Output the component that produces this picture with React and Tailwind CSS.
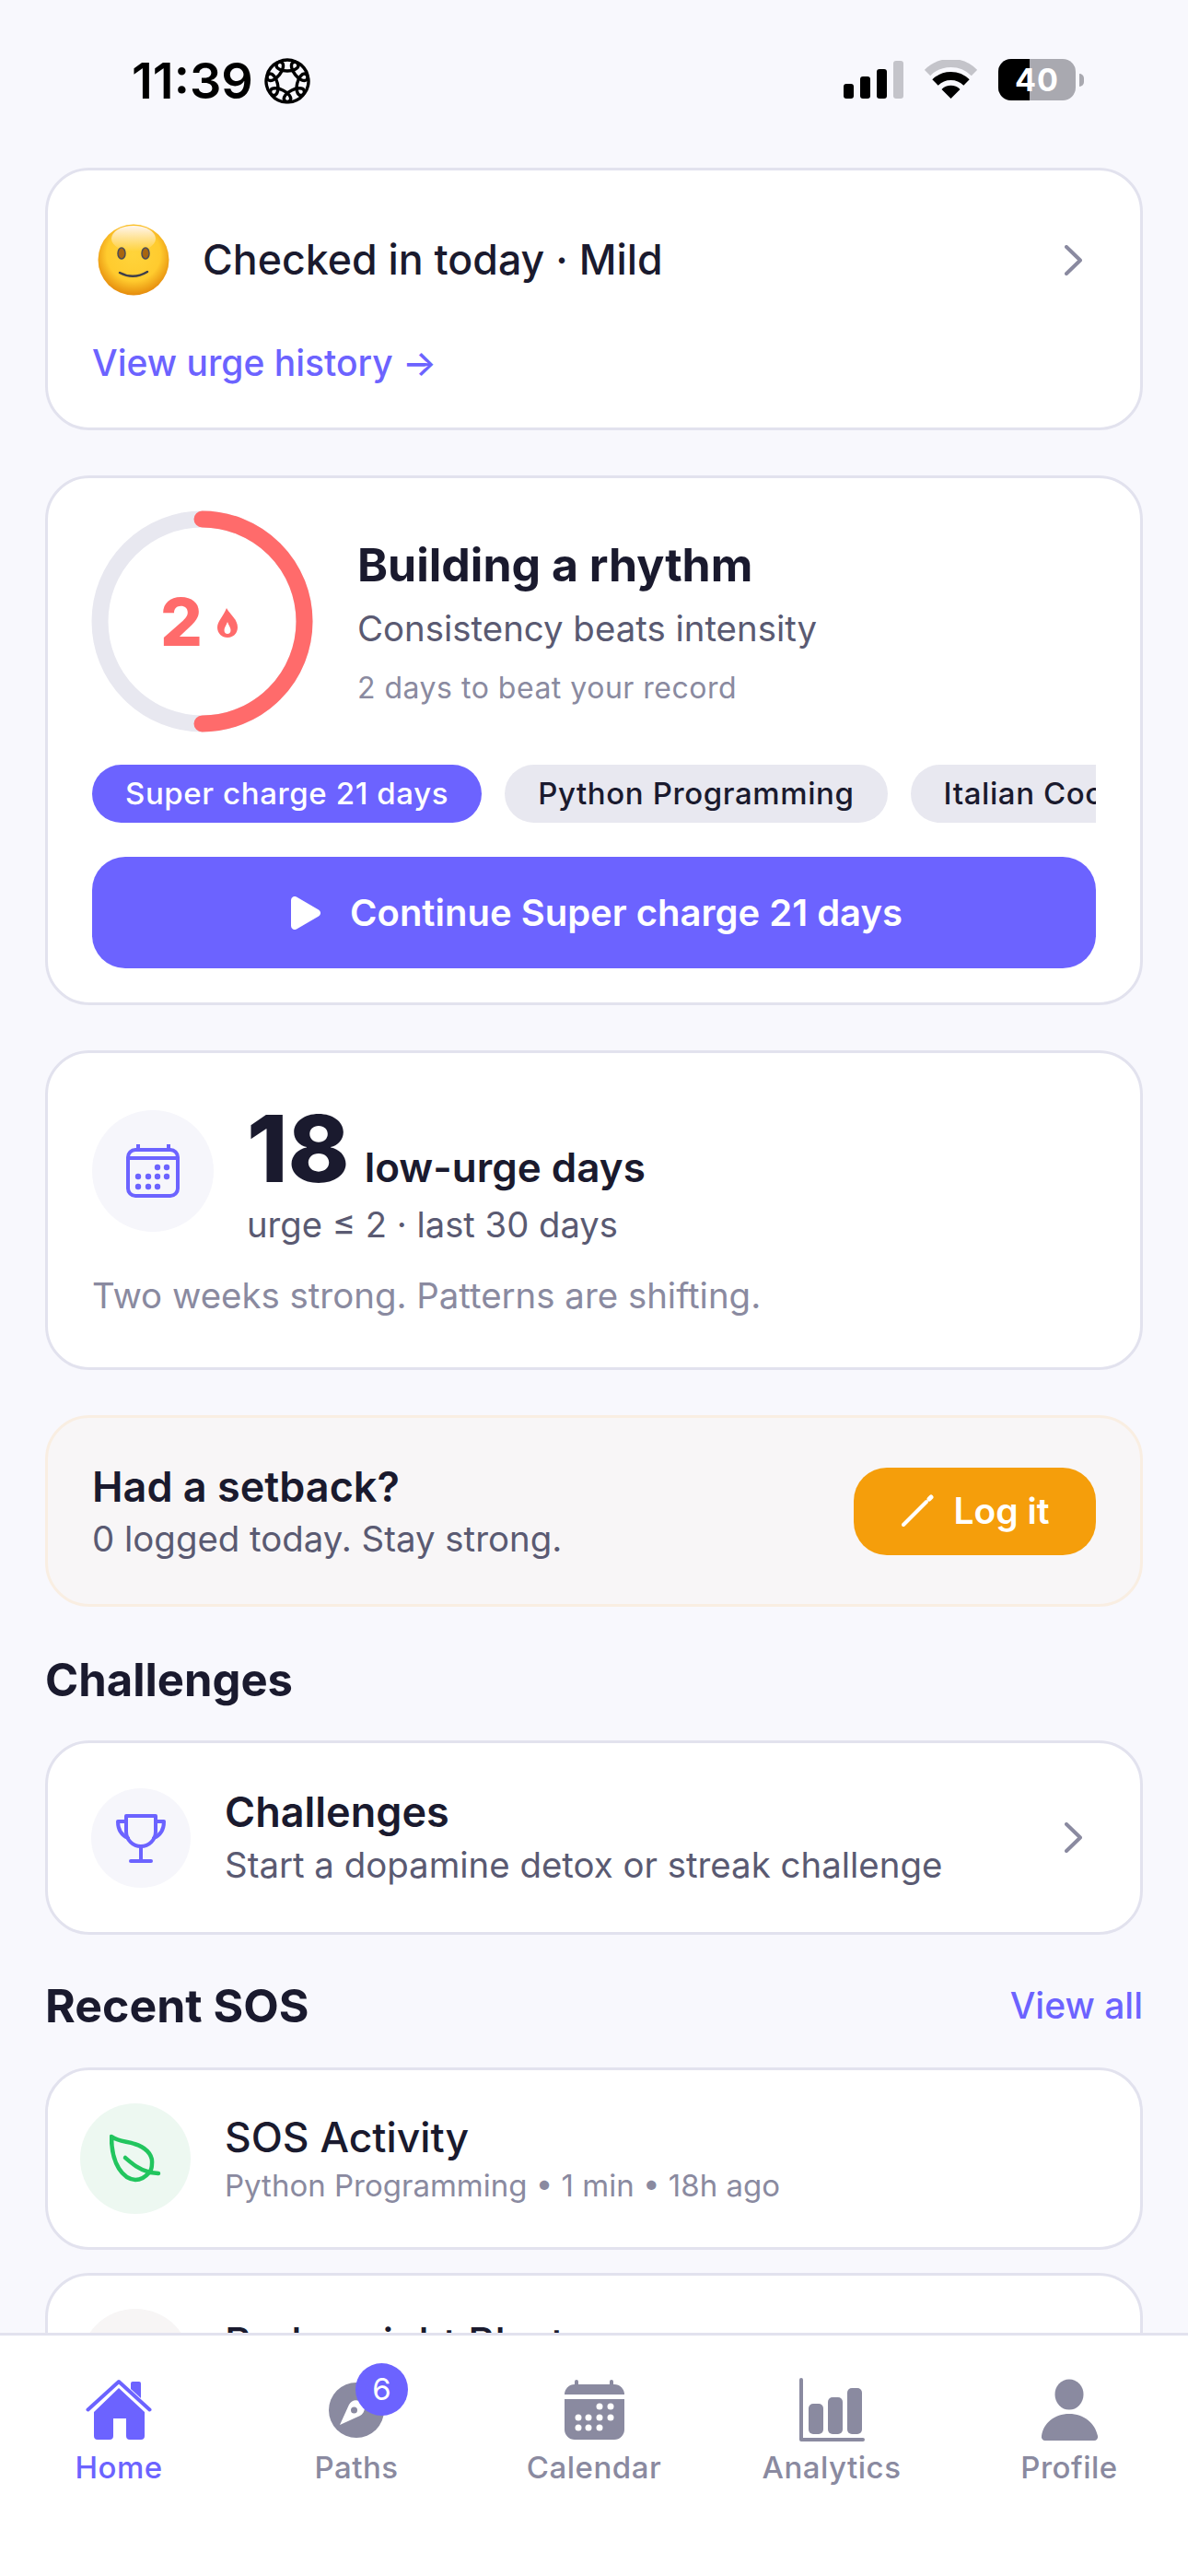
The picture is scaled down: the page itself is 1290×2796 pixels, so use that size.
import React from 'react';

const StatusBar = () => (
  <div className="flex h-[182px] shrink-0 items-start justify-between pl-[143px] pr-[113px] pt-[60px]">
    <div className="flex items-center gap-[12px]">
      <span className="text-[54px] leading-[56px] font-semibold text-black">11:39</span>
      <svg width="50" height="50" viewBox="-25 -25 50 50" fill="none" stroke="black" strokeWidth="3.400">
        {[0, 1, 2, 3, 4, 5, 6].map((i) => (
          <ellipse key={i} cx="0" cy="-17" rx="12" ry="6" transform={`rotate(${(i * 360) / 7})`} />
        ))}
      </svg>
    </div>
    <div className="flex items-center gap-[23px] pt-[4px]">
      <div className="flex h-[41px] items-end gap-[7px]">
        <div className="h-[16px] w-[11px] rounded-[3px] bg-black" />
        <div className="h-[24px] w-[11px] rounded-[3px] bg-black" />
        <div className="h-[32px] w-[11px] rounded-[3px] bg-black" />
        <div className="h-[41px] w-[11px] rounded-[3px] bg-[#C4C4CA]" />
      </div>
      <svg width="57" height="43" viewBox="0 0 57 43" fill="none">
        <path d="M3 14 A36 36 0 0 1 54 14" stroke="#C4C4CA" strokeWidth="9" />
        <path d="M11.5 24.5 A24 24 0 0 1 45.5 24.5" stroke="black" strokeWidth="9" />
        <path d="M28.5 42 L18.5 32 A14 14 0 0 1 38.5 32 Z" fill="black" />
      </svg>
      <div className="flex items-center gap-[4px]">
        <div className="relative flex h-[45px] w-[84px] items-center justify-center overflow-hidden rounded-[14px] bg-[#A9A9B0]">
          <div className="absolute inset-y-0 left-0 w-[34px] bg-black" />
          <span className="relative text-[34px] leading-none font-bold tracking-[1px] text-white">40</span>
        </div>
        <div className="h-[14px] w-[5px] rounded-r-full bg-[#A9A9B0]" />
      </div>
    </div>
  </div>
);

const Chevron = () => (
  <svg width="19" height="33" viewBox="0 0 19 33" fill="none" stroke="#8A8AA0" strokeWidth="4" strokeLinecap="round" strokeLinejoin="round">
    <path d="M2 2 L17 16.5 L2 31" />
  </svg>
);

const Smiley = () => (
  <svg width="80" height="80" viewBox="0 0 80 80" className="shrink-0">
    <defs>
      <radialGradient id="face" cx="50%" cy="42%" r="58%">
        <stop offset="0%" stopColor="#FFD43B" />
        <stop offset="65%" stopColor="#FFCB2E" />
        <stop offset="100%" stopColor="#E58B0C" />
      </radialGradient>
      <linearGradient id="shine" x1="0" y1="0" x2="0" y2="1">
        <stop offset="0%" stopColor="#FFF6EE" />
        <stop offset="100%" stopColor="#FFF6EE" stopOpacity="0" />
      </linearGradient>
    </defs>
    <circle cx="40" cy="40" r="38.5" fill="url(#face)" />
    <ellipse cx="40" cy="17" rx="24" ry="14" fill="url(#shine)" />
    <ellipse cx="27" cy="33" rx="4" ry="6" fill="#A86510" stroke="#4B4B55" strokeWidth="1.5" />
    <ellipse cx="53" cy="33" rx="4" ry="6" fill="#A86510" stroke="#4B4B55" strokeWidth="1.5" />
    <path d="M25 54 Q40 62 55 53" fill="none" stroke="#3F3F4A" strokeWidth="2.5" strokeLinecap="round" />
  </svg>
);

const Ring = () => (
  <div className="relative h-[243px] w-[243px] shrink-0">
    <svg width="243" height="243" viewBox="0 0 243 243" fill="none">
      <circle cx="121.5" cy="121.5" r="111" stroke="#E8E8F0" strokeWidth="18" />
      <path d="M121.5 10.5 A111 111 0 0 1 121.5 232.5" stroke="#FF6B6B" strokeWidth="18" strokeLinecap="round" />
    </svg>
    <div className="absolute inset-0 flex items-center justify-center gap-[15px] pr-[6px]">
      <span className="text-[72px] leading-none font-extrabold text-[#FF6B6B]">2</span>
      <svg width="24" height="32" viewBox="0 0 24 32" className="mt-[2px]">
        <path fillRule="evenodd" d="M11 0 C14 6 23 12 23 21 C23 27.500 18 32 12 32 C6 32 1 27.500 1 21 C1 14 7 10 11 0 Z M12 15 C10.500 19 8.500 21 8.500 24 C8.500 26.500 10 28 12 28 C14 28 15.500 26.500 15.500 24 C15.500 21 13.500 19 12 15 Z" fill="#FF6B6B" />
      </svg>
    </div>
  </div>
);

const MiniCalendar = () => (
  <svg width="58" height="58" viewBox="0 0 58 58" fill="none" stroke="#6C63FF" strokeWidth="4">
    <rect x="2" y="6" width="54" height="50" rx="8" />
    <path d="M2 15 H56" />
    <path d="M13 0 V6 M46 0 V6" strokeLinecap="round" />
    <g fill="#6C63FF" stroke="none">
      {[[34, 25], [44, 25], [13, 35], [24, 35], [34, 35], [44, 35], [13, 46], [24, 46], [34, 46]].map(([x, y]) => (
        <circle key={`${x}-${y}`} cx={x} cy={y} r="3.200" />
      ))}
    </g>
  </svg>
);

const Trophy = () => (
  <svg width="54" height="56" viewBox="0 0 54 56" fill="none" stroke="#6C63FF" strokeWidth="4" strokeLinecap="round" strokeLinejoin="round">
    <path d="M11 4 H43 V21 A16 16 0 0 1 11 21 Z" />
    <path d="M11 10 H2 C2 19 6 25 13 28" />
    <path d="M43 10 H52 C52 19 48 25 41 28" />
    <path d="M27 37 V53" />
    <path d="M16 53 H38" />
  </svg>
);

const Leaf = () => (
  <svg width="56" height="56" viewBox="0 0 56 56" fill="none" stroke="#22C55E" strokeWidth="4.500" strokeLinecap="round" strokeLinejoin="round">
    <path d="M2 4 C10 10 20 9 27 12 C38 15 47 23 46 33 C46 38 45 41 43 43 C38 49 33 51 28 51 C15 50 2 35 2 4 Z" />
    <path d="M17 27 C24 33 32 40 44 43 L53 44" />
  </svg>
);

const HomeIcon = () => (
  <svg width="72" height="72" viewBox="0 0 72 72">
    <g transform="translate(1 3)" fill="#6C63FF">
      <path d="M1.500 32.500 L35 2 L68.500 32.500" fill="none" stroke="#6C63FF" strokeWidth="4" strokeLinecap="round" strokeLinejoin="round" />
      <path d="M48 10 V4 A2 2 0 0 1 50 2 H57 A2 2 0 0 1 59 4 V20 Z" />
      <path d="M35 9 L63 35 V61 A4 4 0 0 1 59 65 H47 A4 4 0 0 1 43 61 V42 H29 V61 A4 4 0 0 1 25 65 H12 A4 4 0 0 1 8 61 V35 Z" />
    </g>
  </svg>
);

const PathsIcon = () => (
  <svg width="72" height="72" viewBox="0 0 72 72">
    <circle cx="36" cy="36" r="30" fill="#8A8AA0" />
    <path d="M18 52 L28 30 C31 24 38 24 42 28 C46 32 46 38 40 42 Z" fill="white" />
    <circle cx="33.500" cy="36" r="3.500" fill="#8A8AA0" />
  </svg>
);

const CalendarIcon = () => (
  <svg width="72" height="72" viewBox="0 0 72 72">
    <g transform="translate(4 3)" fill="#8A8AA0">
      <rect x="11" y="0" width="4" height="8" rx="2" />
      <rect x="49" y="0" width="4" height="8" rx="2" />
      <path d="M0 16 A11 11 0 0 1 11 5 H54 A11 11 0 0 1 65 16 Z" />
      <path d="M0 21 H65 V54 A11 11 0 0 1 54 65 H11 A11 11 0 0 1 0 54 Z" />
      <g fill="white">
        {[[38, 29], [50, 29], [15, 41], [26, 41], [38, 41], [50, 41], [15, 52], [26, 52], [38, 52]].map(([x, y]) => (
          <circle key={`${x}-${y}`} cx={x} cy={y} r="3.500" />
        ))}
      </g>
    </g>
  </svg>
);

const AnalyticsIcon = () => (
  <svg width="72" height="72" viewBox="0 0 72 72" fill="#8A8AA0">
    <path d="M3 3 V68 H70" fill="none" stroke="#8A8AA0" strokeWidth="4" strokeLinecap="round" strokeLinejoin="round" />
    <rect x="11" y="29" width="16" height="33" rx="5" />
    <rect x="32" y="22" width="16" height="40" rx="5" />
    <rect x="53" y="12" width="16" height="50" rx="5" />
  </svg>
);

const ProfileIcon = () => (
  <svg width="72" height="72" viewBox="0 0 72 72" fill="#8A8AA0">
    <ellipse cx="36" cy="19" rx="15.500" ry="16.500" />
    <path d="M6 64 C8 50 20 40 36 40 C52 40 64 50 67 64 A4 4 0 0 1 63 69 H10 A4 4 0 0 1 6 64 Z" />
  </svg>
);

const tabs = [
  { label: 'Home', Icon: HomeIcon, active: true },
  { label: 'Paths', Icon: PathsIcon, badge: 6 },
  { label: 'Calendar', Icon: CalendarIcon },
  { label: 'Analytics', Icon: AnalyticsIcon },
  { label: 'Profile', Icon: ProfileIcon },
];

const TabBar = () => (
  <div className="grid h-[264px] shrink-0 grid-cols-5 border-t-[3px] border-[#E2E2EE] bg-white pt-[45px]">
    {tabs.map(({ label, Icon, active, badge }) => (
      <div key={label} className="flex flex-col items-center gap-[6px]">
        <div className="relative h-[72px] w-[72px]">
          <Icon />
          {badge && (
            <div className="absolute left-[35px] top-[-15px] flex h-[57px] w-[57px] items-center justify-center rounded-full bg-[#6C63FF] text-[33px] leading-none text-white">
              {badge}
            </div>
          )}
        </div>
        <span className={`text-[33px] leading-[40px] font-medium tracking-[0.5px] ${active ? 'text-[#6C63FF]' : 'text-[#8A8AA0]'}`}>{label}</span>
      </div>
    ))}
  </div>
);

export default function App() {
  return (
    <div className="flex h-[2796px] w-[1290px] flex-col overflow-hidden bg-[#F8F8FD] text-[#1A1A2E] [font-family:Inter,'Liberation_Sans',sans-serif]">
      <StatusBar />

      <div className="min-h-0 flex-1 overflow-hidden px-[49px]">
        {/* Check-in */}
        <div className="h-[285px] rounded-[48px] border-[3px] border-[#E2E2EE] bg-white pl-[53px] pr-[48px] pt-[57px]">
          <div className="flex items-center justify-between pr-[15px]">
            <div className="flex items-center gap-[35px]">
              <Smiley />
              <span className="text-[44.7px] leading-[54px] font-medium">Checked in today · Mild</span>
            </div>
            <Chevron />
          </div>
          <p className="-ml-[5px] mt-[48px] text-[39px] leading-[48px] font-medium text-[#6C63FF]">View urge history →</p>
        </div>

        {/* Streak */}
        <div className="mt-[49px] h-[575px] rounded-[48px] border-[3px] border-[#E2E2EE] bg-white px-[48px] pt-[34px]">
          <div className="-ml-[2px] flex items-center gap-[47px]">
            <Ring />
            <div className="flex flex-col">
              <span className="text-[50px] leading-[62px] font-bold">Building a rhythm</span>
              <span className="mt-[13px] text-[38.4px] leading-[50px] text-[#5A5A72]">Consistency beats intensity</span>
              <span className="mt-[20px] text-[32px] leading-[40px] tracking-[0.5px] text-[#8A8AA0]">2 days to beat your record</span>
            </div>
          </div>
          <div className="mt-[34px] flex gap-[25px] overflow-hidden">
            <span className="flex h-[63px] shrink-0 items-center rounded-full bg-[#6C63FF] px-[36px] text-[33px] font-medium tracking-[0.6px] text-white">Super charge 21 days</span>
            <span className="flex h-[63px] shrink-0 items-center rounded-full bg-[#E8E8F0] px-[36px] text-[33px] font-medium tracking-[0.6px]">Python Programming</span>
            <span className="flex h-[63px] shrink-0 items-center rounded-full bg-[#E8E8F0] px-[36px] text-[33px] font-medium tracking-[0.6px]">Italian Cooking</span>
          </div>
          <div className="mt-[37px] flex h-[121px] items-center justify-center gap-[32px] rounded-[36px] bg-[#6C63FF] pl-[6px]">
            <svg width="32" height="36" viewBox="0 0 32 36" fill="white">
              <path d="M0 4 A4 4 0 0 1 6 0.500 L30 14.500 A4 4 0 0 1 30 21.500 L6 35.500 A4 4 0 0 1 0 32 Z" />
            </svg>
            <span className="text-[40px] font-semibold text-white">Continue Super charge 21 days</span>
          </div>
        </div>

        {/* Low urge */}
        <div className="mt-[49px] h-[347px] rounded-[48px] border-[3px] border-[#E2E2EE] bg-white px-[48px] pt-[62px]">
          <div className="flex items-start gap-[36px]">
            <div className="flex h-[132px] w-[132px] shrink-0 items-center justify-center rounded-full bg-[#F6F6FB]">
              <MiniCalendar />
            </div>
            <div className="-mt-[7px] flex flex-col">
              <div className="flex items-baseline gap-[16px]">
                <span className="text-[101px] leading-[96px] font-extrabold">18</span>
                <span className="text-[44px] leading-[54px] font-semibold">low-urge days</span>
              </div>
              <span className="mt-[11px] text-[38.2px] leading-[48px] text-[#5A5A72]">urge ≤ 2 · last 30 days</span>
            </div>
          </div>
          <p className="mt-[29px] text-[38.4px] leading-[48px] text-[#8A8AA0]">Two weeks strong. Patterns are shifting.</p>
        </div>

        {/* Setback */}
        <div className="mt-[49px] flex h-[208px] items-center justify-between rounded-[48px] border-[3px] border-[#F9EEE2] bg-[#F8F6F7] px-[48px]">
          <div className="flex flex-col pt-[2px]">
            <span className="text-[45px] leading-[54px] font-semibold">Had a setback?</span>
            <span className="mt-[4px] text-[38.4px] leading-[50px] text-[#5A5A72]">0 logged today. Stay strong.</span>
          </div>
          <div className="flex h-[95px] w-[263px] items-center justify-center gap-[22px] rounded-[36px] bg-[#F59E0B]">
            <svg width="36" height="36" viewBox="0 0 36 36" fill="none" stroke="white" strokeLinecap="round">
              <path d="M3 33 L28 8" strokeWidth="4" />
              <path d="M31 5 L33 3" strokeWidth="5" />
            </svg>
            <span className="text-[39px] font-semibold text-white">Log it</span>
          </div>
        </div>

        {/* Challenges */}
        <h2 className="mt-[49px] text-[49px] leading-[62px] font-bold">Challenges</h2>
        <div className="mt-[34px] flex h-[211px] items-center justify-between rounded-[48px] border-[3px] border-[#E2E2EE] bg-white pl-[47px] pr-[63px]">
          <div className="flex items-center gap-[37px]">
            <div className="flex h-[108px] w-[108px] shrink-0 items-center justify-center rounded-full bg-[#F6F6FB]">
              <Trophy />
            </div>
            <div className="flex flex-col">
              <span className="text-[45px] leading-[54px] font-semibold">Challenges</span>
              <span className="mt-[5px] text-[38.4px] leading-[50px] text-[#5A5A72]">Start a dopamine detox or streak challenge</span>
            </div>
          </div>
          <Chevron />
        </div>

        {/* Recent SOS */}
        <div className="mt-[46px] flex items-center justify-between">
          <h2 className="text-[50px] leading-[62px] font-bold">Recent SOS</h2>
          <span className="text-[39px] font-medium text-[#6C63FF]">View all</span>
        </div>
        <div className="mt-[36px] flex h-[198px] items-center gap-[37px] rounded-[48px] border-[3px] border-[#E2E2EE] bg-white pl-[35px]">
          <div className="flex h-[120px] w-[120px] shrink-0 items-center justify-center rounded-full bg-[#EDF8F1]">
            <Leaf />
          </div>
          <div className="flex flex-col">
            <span className="text-[44.5px] leading-[54px] font-medium">SOS Activity</span>
            <span className="mt-[3px] text-[33px] leading-[44px] text-[#8A8AA0]">Python Programming • 1 min • 18h ago</span>
          </div>
        </div>
        <div className="mt-[25px] flex h-[198px] items-center gap-[37px] rounded-[48px] border-[3px] border-[#E2E2EE] bg-white pl-[35px]">
          <div className="h-[120px] w-[120px] shrink-0 rounded-full bg-[#F7F5F5]" />
          <div className="flex flex-col">
            <span className="text-[44.5px] leading-[54px] font-medium">Bodyweight Blast</span>
            <span className="mt-[3px] text-[33px] leading-[44px] text-[#8A8AA0]">Python Programming • 1 min</span>
          </div>
        </div>
      </div>

      <TabBar />
    </div>
  );
}
